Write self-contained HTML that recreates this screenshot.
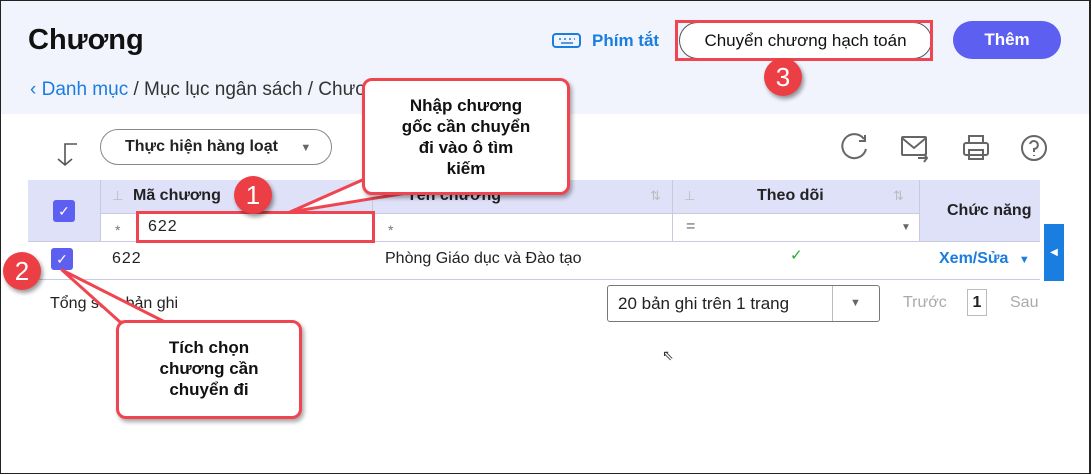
<!DOCTYPE html>
<html><head><meta charset="utf-8"><style>
*{box-sizing:border-box;margin:0;padding:0}
body{width:1092px;height:475px;position:relative;overflow:hidden;font-family:"Liberation Sans",sans-serif;background:#fff;color:#222}
.a{position:absolute}
.frame{left:0;top:0;width:1091px;height:474px;border:1.5px solid #222;border-right:2px solid #222}
.hdr{left:1px;top:1px;width:1088px;height:113px;background:#f1f4fd}
.th{background:#dfe1f9;font-weight:bold;font-size:16px}
.line{background:#c8cbe0}
.callout{background:#fff;border:3px solid #ef4550;border-radius:10px;box-shadow:2px 3px 4px rgba(0,0,0,.35);font-weight:bold;font-size:17px;text-align:center;line-height:21px;color:#111}
.num{width:38px;height:38px;border-radius:50%;background:#ec3f45;color:#fff;font-size:26px;text-align:center;line-height:38px;box-shadow:2px 3px 4px rgba(0,0,0,.4)}
.cb{width:22px;height:22px;background:#5c5ff0;border-radius:3px;color:#fff;text-align:center;font-size:14px;line-height:22px}
</style></head><body>
<div class="a hdr"></div>
<div class="a" style="left:28px;top:24px;font-size:29px;font-weight:bold;color:#111">Chương</div>
<div class="a" style="left:30px;top:79px;font-size:19px;color:#333"><span style="color:#1a7de0">‹ Danh mục</span> / Mục lục ngân sách / Chươn</div>
<svg class="a" style="left:552px;top:33px" width="30" height="16"><rect x="1" y="1" width="27" height="13" rx="3" fill="none" stroke="#1a7de0" stroke-width="2"/><path d="M7 6h2M12 6h2M17 6h2M22 6h1M9 10h12" stroke="#1a7de0" stroke-width="1.6"/></svg>
<div class="a" style="left:592px;top:31px;font-size:17px;font-weight:bold;color:#1a7de0">Phím tắt</div>
<div class="a" style="left:679px;top:22px;width:253px;height:37px;border-radius:19px;background:#fff;border:1px solid #555;font-size:17px;text-align:center;line-height:36px;color:#111">Chuyển chương hạch toán</div>
<div class="a" style="left:675px;top:20px;width:258px;height:41px;border:3px solid #ef4550"></div>
<div class="a" style="left:953px;top:21px;width:108px;height:38px;border-radius:19px;background:#5c5ff0;color:#fff;font-weight:bold;font-size:17px;text-align:center;line-height:38px">Thêm</div>
<div class="a num" style="left:764px;top:58px">3</div>

<svg class="a" style="left:53px;top:140px" width="26" height="28"><path d="M24 4H12V25M5 19l7 6 7-6" fill="none" stroke="#555" stroke-width="1.6"/></svg>
<div class="a" style="left:100px;top:129px;width:232px;height:36px;border:1.5px solid #888;border-radius:18px;font-size:16px;line-height:33px;padding-left:24px;font-weight:bold;color:#222">Thực hiện hàng loạt <span style="font-size:11px;color:#666;margin-left:18px">▼</span></div>
<svg class="a" style="left:838px;top:133px" width="210" height="30" fill="none" stroke="#666" stroke-width="2"><path d="M26 6A12 12 0 1 0 28 16"/><path d="M27 2v6h-6"/><rect x="64" y="4" width="24" height="18" rx="1"/><path d="M64 5l12 10 12-10M80 25h9M86 21l3 4-3 4"/><rect x="126" y="10" width="24" height="12" rx="2"/><rect x="131" y="3" width="14" height="7"/><rect x="131" y="17" width="14" height="9"/><circle cx="196" cy="15" r="12"/><path d="M192 11a4 4 0 1 1 4 5v3M196 22v1"/></svg>

<div class="a th" style="left:28px;top:180px;width:1012px;height:34px"></div>
<div class="a th" style="left:28px;top:214px;width:72px;height:27px"></div>
<div class="a th" style="left:919px;top:214px;width:121px;height:27px"></div>
<div class="a line" style="left:100px;top:180px;width:1px;height:61px"></div>
<div class="a line" style="left:372px;top:180px;width:1px;height:61px"></div>
<div class="a line" style="left:672px;top:180px;width:1px;height:61px"></div>
<div class="a line" style="left:919px;top:180px;width:1px;height:61px"></div>
<div class="a line" style="left:100px;top:213px;width:819px;height:1px"></div>
<div class="a line" style="left:28px;top:241px;width:1012px;height:1px"></div>
<div class="a line" style="left:28px;top:279px;width:1012px;height:1px"></div>
<div class="a cb" style="left:53px;top:200px">✓</div>
<div class="a" style="left:112px;top:188px;color:#bbb;font-size:13px">⊥</div>
<div class="a" style="left:133px;top:187px;font-weight:bold;font-size:16px">Mã chương</div>
<div class="a" style="left:407px;top:187px;font-weight:bold;font-size:16px">Tên chương</div>
<div class="a" style="left:650px;top:188px;color:#bbb;font-size:13px">⇅</div>
<div class="a" style="left:684px;top:188px;color:#bbb;font-size:13px">⊥</div>
<div class="a" style="left:757px;top:187px;font-weight:bold;font-size:16px">Theo dõi</div>
<div class="a" style="left:893px;top:188px;color:#bbb;font-size:13px">⇅</div>
<div class="a" style="left:947px;top:202px;font-weight:bold;font-size:16px">Chức năng</div>
<div class="a" style="left:115px;top:222px;color:#777;font-size:14px">*</div>
<div class="a" style="left:148px;top:218px;font-size:16px;letter-spacing:1px">622</div>
<div class="a" style="left:388px;top:222px;color:#777;font-size:14px">*</div>
<div class="a" style="left:686px;top:218px;color:#666;font-size:16px">=</div>
<div class="a" style="left:901px;top:222px;color:#666;font-size:10px">▼</div>
<div class="a" style="left:112px;top:250px;font-size:16px;letter-spacing:1px">622</div>
<div class="a" style="left:385px;top:250px;font-size:16px">Phòng Giáo dục và Đào tạo</div>
<div class="a" style="left:790px;top:246px;color:#2a2;font-size:15px">✓</div>
<div class="a" style="left:939px;top:250px;font-size:16px;font-weight:bold;color:#1a7de0">Xem/Sửa <span style="font-size:11px;margin-left:6px">▼</span></div>
<div class="a" style="left:1044px;top:224px;width:20px;height:57px;background:#1a7de0;color:#fff;font-size:10px;line-height:57px;text-align:center">◀</div>
<div class="a" style="left:136px;top:211px;width:239px;height:32px;border:3px solid #ef4550"></div>
<div class="a cb" style="left:51px;top:248px">✓</div>

<div class="a" style="left:50px;top:295px;font-size:16px">Tổng số <b>1</b> bản ghi</div>
<div class="a" style="left:607px;top:285px;width:273px;height:37px;border:1px solid #777;border-radius:3px;font-size:17px;line-height:35px;padding-left:10px">20 bản ghi trên 1 trang</div>
<div class="a" style="left:832px;top:286px;width:1px;height:35px;background:#bbb"></div>
<div class="a" style="left:850px;top:297px;color:#666;font-size:11px">▼</div>
<div class="a" style="left:903px;top:294px;color:#aaa;font-size:16px">Trước</div>
<div class="a" style="left:967px;top:289px;width:20px;height:27px;border:1px solid #bbb;font-weight:bold;font-size:16px;text-align:center;line-height:25px">1</div>
<div class="a" style="left:1010px;top:294px;color:#aaa;font-size:16px">Sau</div>
<div class="a" style="left:662px;top:347px;font-size:14px;color:#333">⇖</div>

<svg class="a" style="left:0;top:0" width="1092" height="475"><polygon points="290,212 385,170 425,190" fill="#fff" stroke="#ef4550" stroke-width="3" stroke-linejoin="round"/><polygon points="62,270 120,322 165,322" fill="#fff" stroke="#ef4550" stroke-width="3" stroke-linejoin="round"/></svg>
<div class="a callout" style="left:362px;top:78px;width:208px;height:117px;padding-top:14px">Nhập chương<br>gốc cần chuyển<br>đi vào ô tìm<br>kiếm</div>
<div class="a callout" style="left:116px;top:320px;width:186px;height:99px;padding-top:14px">Tích chọn<br>chương cần<br>chuyển đi</div>
<div class="a num" style="left:234px;top:176px">1</div>
<div class="a num" style="left:3px;top:252px">2</div>
<div class="a frame"></div>
</body></html>
